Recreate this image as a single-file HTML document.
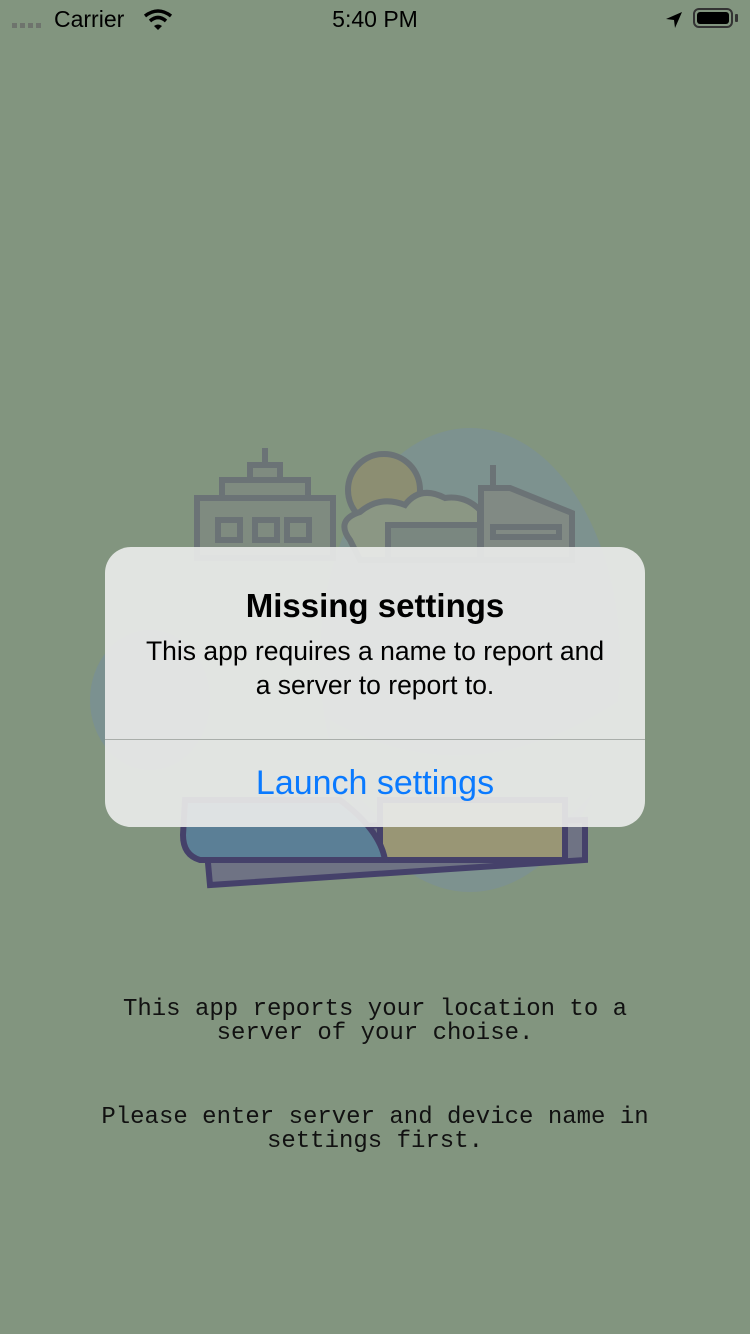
<!DOCTYPE html>
<html><head><style>
html,body{margin:0;padding:0}
body{width:750px;height:1334px;background:#82957f;position:relative;overflow:hidden;font-family:"Liberation Sans",sans-serif}
.sb{position:absolute;top:0;left:0;width:750px;height:40px;font-size:23px;color:#000}
.alert{position:absolute;left:105px;top:547px;width:540px;height:280px;border-radius:26px;background:rgba(232,234,232,0.93);text-align:center}
.t{position:absolute;top:587px;left:105px;width:540px;text-align:center;font-weight:bold;font-size:33px}
.m{position:absolute;top:634px;left:105px;width:540px;text-align:center;font-size:26.5px;line-height:34px}
.sep{position:absolute;left:105px;top:739px;width:540px;height:1px;background:#a9aeaa}
.btn{position:absolute;top:764px;left:105px;width:540px;text-align:center;font-size:34px;color:#0a7aff}
.mono{position:absolute;left:0;width:750px;text-align:center;font-family:"Liberation Mono",monospace;font-size:24px;line-height:24px;color:#111}
</style></head><body>
<div class="sb">
<div style="position:absolute;left:12px;top:23px;width:30px;height:5px;background:repeating-linear-gradient(90deg,#6e746d 0 5px,transparent 5px 8px)"></div>
<div style="position:absolute;left:54px;top:6px">Carrier</div>
<svg style="position:absolute;left:143px;top:8px" width="30" height="24" viewBox="0 0 30 24"><path d="M2 8 Q15 -2 28 8" stroke="#000" stroke-width="3.5" fill="none"/><path d="M7 13 Q15 6 23 13" stroke="#000" stroke-width="3.5" fill="none"/><path d="M11 18 L15 22 L19 18 Q15 15 11 18Z" fill="#000"/></svg>
<div style="position:absolute;left:0;width:750px;text-align:center;top:6px">5:40 PM</div>
<svg style="position:absolute;left:664px;top:10px" width="20" height="20" viewBox="0 0 20 20"><path d="M18 2 L2 9 L10 10 L11 18Z" fill="#000"/></svg>
<div style="position:absolute;left:693px;top:8px;width:40px;height:20px;border:2px solid #333;border-radius:6px;box-sizing:border-box;padding:2px"><div style="background:#000;width:100%;height:100%;border-radius:3px"></div></div>
<div style="position:absolute;left:735px;top:14px;width:3px;height:8px;background:#333;border-radius:1px"></div>
</div>
<svg style="position:absolute;left:0;top:0" width="750" height="1334">
<ellipse cx="470" cy="660" rx="150" ry="232" fill="#7d928f"/>
<path d="M330 760 Q470 960 620 760 L620 700 Q470 800 330 720Z" fill="#7b967d"/>
<ellipse cx="150" cy="700" rx="60" ry="70" fill="#7b9190"/>
<g stroke="#6b7376" stroke-width="6" fill="#7f8b80">
<line x1="265" y1="448" x2="265" y2="478"/>
<rect x="250" y="465" width="30" height="15"/>
<rect x="222" y="480" width="86" height="18"/>
<rect x="197" y="498" width="136" height="60"/>
<rect x="218" y="520" width="22" height="20" fill="none"/><rect x="255" y="520" width="22" height="20" fill="none"/><rect x="287" y="520" width="22" height="20" fill="none"/>
<circle cx="384" cy="490" r="36" fill="#8c8e72"/>
<path d="M350 540 Q335 520 360 512 Q380 495 405 505 Q420 485 445 498 Q465 495 480 510 L480 560 L360 560Z" fill="#8b9784"/>
<rect x="388" y="525" width="92" height="35" fill="#7a8780"/>
<line x1="493" y1="465" x2="493" y2="488"/>
<path d="M481 488 L510 488 L572 513 L572 560 L481 560Z" fill="#818a84"/>
<rect x="493" y="527" width="66" height="10" fill="none"/>
</g>
<path d="M205 830 L585 820 L585 860 L210 885Z" fill="#6f7384" stroke="#45416a" stroke-width="6"/>
<rect x="380" y="800" width="185" height="60" fill="#999675" stroke="#45416a" stroke-width="6"/>
<path d="M185 800 L340 800 Q380 830 385 860 L200 860 Q183 855 183 835Z" fill="#5b7f96" stroke="#45416a" stroke-width="6"/>
</svg>
<div class="alert"></div>
<div class="t">Missing settings</div>
<div class="m">This app requires a name to report and<br>a server to report to.</div>
<div class="sep"></div>
<div class="btn">Launch settings</div>
<div class="mono" style="top:998px">This app reports your location to a<br>server of your choise.</div>
<div class="mono" style="top:1106px">Please enter server and device name in<br>settings first.</div>
</body></html>
